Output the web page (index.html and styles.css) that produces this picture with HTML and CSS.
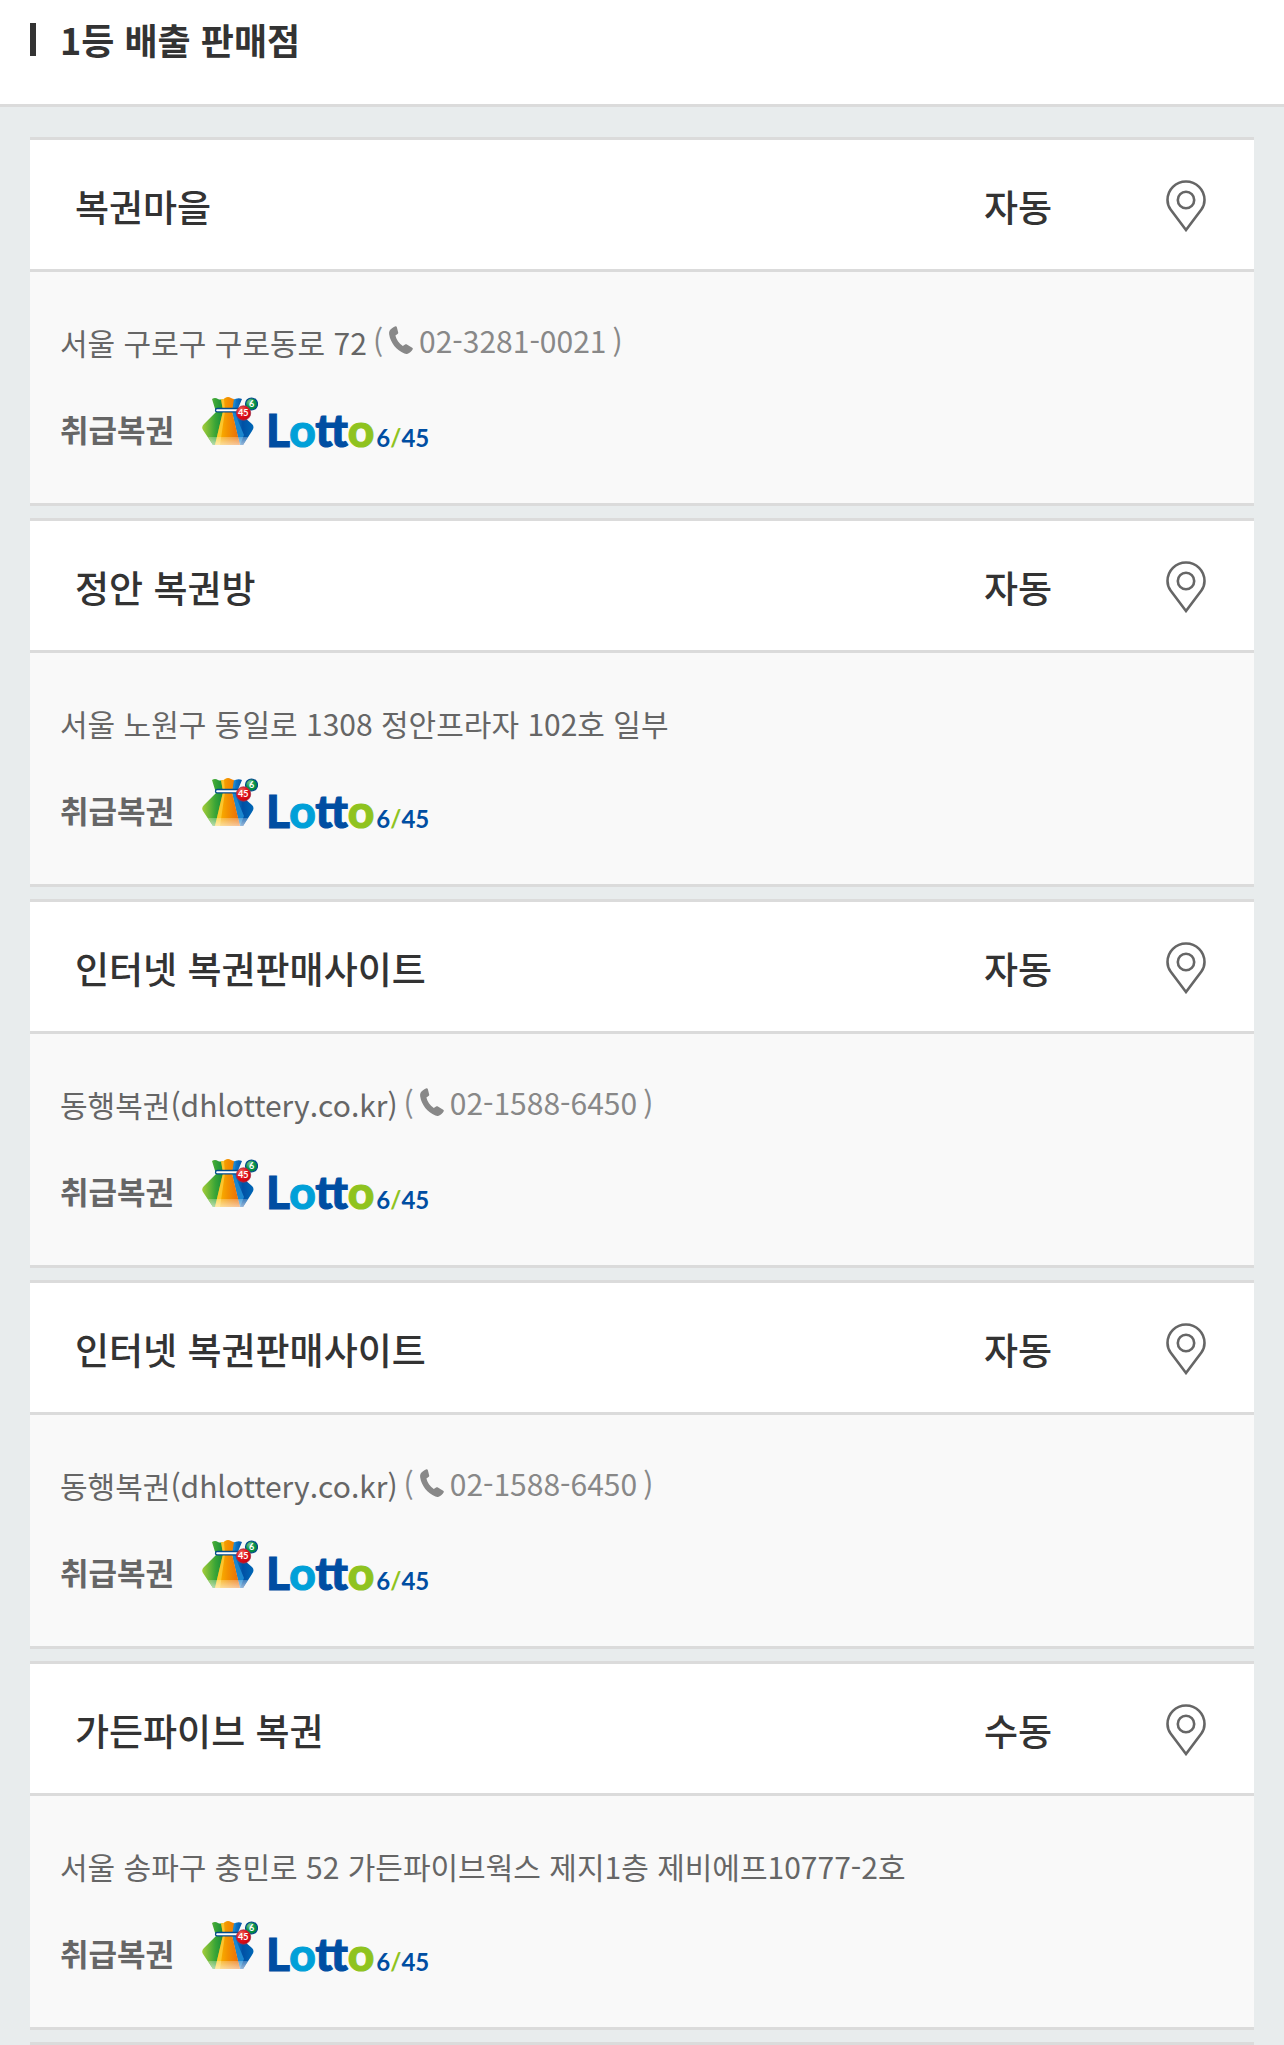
FILE: index.html
```html
<!DOCTYPE html>
<html lang="ko">
  <head>
    <meta charset="UTF-8" />
    <meta name="viewport" content="width=device-width, initial-scale=1.0" />
    <title>1등 배출 판매점</title>
    <link rel="stylesheet" href="styles.css">
  </head>
  <body>
    <!-- Shared icons -->
    <svg class="sprite" aria-hidden="true">
      <defs>
        <linearGradient id="bagGreen" x1="0" x2="1">
          <stop offset="0" stop-color="#a5cd39" />
          <stop offset="0.6" stop-color="#3aa536" />
          <stop offset="1" stop-color="#128a3c" />
        </linearGradient>
        <linearGradient id="bagOrange" x1="0" x2="1">
          <stop offset="0" stop-color="#fdc500" />
          <stop offset="0.5" stop-color="#f39200" />
          <stop offset="1" stop-color="#ea6a0a" />
        </linearGradient>
        <linearGradient id="bagBlue" x1="0" x2="1">
          <stop offset="0" stop-color="#1b8ad6" />
          <stop offset="0.5" stop-color="#0050a4" />
          <stop offset="1" stop-color="#0068b7" />
        </linearGradient>
        <linearGradient id="bagShine" x1="0" y1="0" x2="0" y2="1">
          <stop offset="0" stop-color="#fff" stop-opacity="0.25" />
          <stop offset="1" stop-color="#fff" stop-opacity="0.6" />
        </linearGradient>
        <radialGradient id="ballRed" cx="0.35" cy="0.3" r="0.8">
          <stop offset="0" stop-color="#f0705f" />
          <stop offset="0.5" stop-color="#e0121c" />
          <stop offset="1" stop-color="#c4000f" />
        </radialGradient>
        <radialGradient id="ballGreen" cx="0.35" cy="0.3" r="0.8">
          <stop offset="0" stop-color="#7cc68d" />
          <stop offset="0.5" stop-color="#0a9548" />
          <stop offset="1" stop-color="#00803c" />
        </radialGradient>
      </defs>
      <symbol id="pin" viewBox="0 0 40 52">
        <path d="M20 50 L4.6 29.5 C2.6 26.8 1.5 23.6 1.5 20 C1.5 9.6 9.8 1.5 20 1.5 S38.5 9.6 38.5 20 C38.5 23.6 37.4 26.8 35.4 29.5 Z" fill="none" stroke="#666" stroke-width="2.6" />
        <circle cx="20" cy="20" r="8.2" fill="none" stroke="#666" stroke-width="2.6" />
      </symbol>
      <symbol id="phone" viewBox="0 0 24 28">
        <path d="M1.5 3.6 C3 1.8 5 .6 6.6 .2 C7.3 .1 7.6 .5 7.8 1 L9.2 6.5 C9.3 7.3 9.1 7.7 8.5 8.1 L6.4 9.6 C7.4 13.6 9.8 17.4 13.8 20 L16.1 18.6 C16.8 18.2 17.3 18.2 17.9 18.6 L23.2 21.7 C23.9 22.2 24 22.6 23.7 23.3 C22.6 25.3 20.7 26.9 18.6 27.7 C17.5 28.1 16.5 27.9 15.4 27.4 C7.4 23.8 1.6 17 .2 8.4 C-.1 6.4 .3 4.9 1.5 3.6 Z" fill="#888" />
      </symbol>
      <symbol id="bag" viewBox="0 0 56 50">
        <path d="M10 2 Q13 0 16 2 Q18 3 21 2 L22 14 L14 48 L11 48 L1 33 Q-1 30 2 27 L14 15 Z" fill="url(#bagGreen)" />
        <path d="M40 2 Q36 0 31 3 L30 14 L38 48 L41 48 L50 34 Q53 30 50 27 L35 14 Z" fill="url(#bagBlue)" />
        <path d="M31 3 L34 2 L32 14 L42 38 L38 48 L30 14 Z" fill="#1b87cf" />
        <path d="M19 2 Q21 3 23 1 Q26 -1 29 1 Q31 2 32 2 L30 14 L38 48 L13 48 L21 14 Z" fill="url(#bagOrange)" />
        <path d="M19 2 L22 2 L23 14 L18 48 L13 48 L21 14 Z" fill="#ffd84a" opacity="0.6" />
        <path d="M6 40 L46 40 L41 48 L11 48 Z" fill="url(#bagShine)" />
        <rect x="13.5" y="11.5" width="25" height="3.4" rx="1.7" fill="#fff" stroke="#004b8d" stroke-width="1.3" />
        <circle cx="49.5" cy="7" r="6" fill="url(#ballGreen)" stroke="#004b8d" stroke-width="1.2" />
        <circle cx="41.5" cy="16" r="7.2" fill="url(#ballRed)" stroke="#a5304a" stroke-width="0.8" />
      </symbol>
    </svg>

    <header class="page-header">
      <h1>1등 배출 판매점</h1>
    </header>

    <main class="store-list">
      <article class="store">
        <div class="store-head">
          <h2>복권마을</h2>
          <span class="type">자동</span>
          <a href="#" class="map-link" aria-label="지도 보기"><svg><use href="#pin" /></svg></a>
        </div>
        <div class="store-body">
          <p class="address">
            <span>서울 구로구 구로동로 72</span>
            <span class="tel">(<a href="tel:02-3281-0021"><svg><use href="#phone" /></svg>02-3281-0021</a>)</span>
          </p>
          <div class="games">
            <strong>취급복권</strong>
            <div class="lotto">
              <svg viewBox="0 0 56 50"><use href="#bag" /><text x="47" y="10">6</text><text x="36" y="19">45</text></svg>
              <span class="lotto-name">L<span class="sky">o</span>tt<span class="lime">o</span></span>
              <span class="lotto-number">6<span class="lime">/</span>45</span>
            </div>
          </div>
        </div>
      </article>

      <article class="store">
        <div class="store-head">
          <h2>정안 복권방</h2>
          <span class="type">자동</span>
          <a href="#" class="map-link" aria-label="지도 보기"><svg><use href="#pin" /></svg></a>
        </div>
        <div class="store-body">
          <p class="address">
            <span>서울 노원구 동일로 1308 정안프라자 102호 일부</span>
          </p>
          <div class="games">
            <strong>취급복권</strong>
            <div class="lotto">
              <svg viewBox="0 0 56 50"><use href="#bag" /><text x="47" y="10">6</text><text x="36" y="19">45</text></svg>
              <span class="lotto-name">L<span class="sky">o</span>tt<span class="lime">o</span></span>
              <span class="lotto-number">6<span class="lime">/</span>45</span>
            </div>
          </div>
        </div>
      </article>

      <article class="store">
        <div class="store-head">
          <h2>인터넷 복권판매사이트</h2>
          <span class="type">자동</span>
          <a href="#" class="map-link" aria-label="지도 보기"><svg><use href="#pin" /></svg></a>
        </div>
        <div class="store-body">
          <p class="address">
            <span>동행복권(dhlottery.co.kr)</span>
            <span class="tel">(<a href="tel:02-1588-6450"><svg><use href="#phone" /></svg>02-1588-6450</a>)</span>
          </p>
          <div class="games">
            <strong>취급복권</strong>
            <div class="lotto">
              <svg viewBox="0 0 56 50"><use href="#bag" /><text x="47" y="10">6</text><text x="36" y="19">45</text></svg>
              <span class="lotto-name">L<span class="sky">o</span>tt<span class="lime">o</span></span>
              <span class="lotto-number">6<span class="lime">/</span>45</span>
            </div>
          </div>
        </div>
      </article>

      <article class="store">
        <div class="store-head">
          <h2>인터넷 복권판매사이트</h2>
          <span class="type">자동</span>
          <a href="#" class="map-link" aria-label="지도 보기"><svg><use href="#pin" /></svg></a>
        </div>
        <div class="store-body">
          <p class="address">
            <span>동행복권(dhlottery.co.kr)</span>
            <span class="tel">(<a href="tel:02-1588-6450"><svg><use href="#phone" /></svg>02-1588-6450</a>)</span>
          </p>
          <div class="games">
            <strong>취급복권</strong>
            <div class="lotto">
              <svg viewBox="0 0 56 50"><use href="#bag" /><text x="47" y="10">6</text><text x="36" y="19">45</text></svg>
              <span class="lotto-name">L<span class="sky">o</span>tt<span class="lime">o</span></span>
              <span class="lotto-number">6<span class="lime">/</span>45</span>
            </div>
          </div>
        </div>
      </article>

      <article class="store">
        <div class="store-head">
          <h2>가든파이브 복권</h2>
          <span class="type">수동</span>
          <a href="#" class="map-link" aria-label="지도 보기"><svg><use href="#pin" /></svg></a>
        </div>
        <div class="store-body">
          <p class="address">
            <span>서울 송파구 충민로 52 가든파이브웍스 제지1층 제비에프10777-2호</span>
          </p>
          <div class="games">
            <strong>취급복권</strong>
            <div class="lotto">
              <svg viewBox="0 0 56 50"><use href="#bag" /><text x="47" y="10">6</text><text x="36" y="19">45</text></svg>
              <span class="lotto-name">L<span class="sky">o</span>tt<span class="lime">o</span></span>
              <span class="lotto-number">6<span class="lime">/</span>45</span>
            </div>
          </div>
        </div>
      </article>

      <hr class="list-end" />
    </main>
  </body>
</html>
```

FILE: styles.css
```css
* {
  box-sizing: border-box;
}
body {
  margin: 0;
  background-color: #e8eced;
  color: #333;
  font-family: "Noto Sans CJK KR", sans-serif;
}
h1,
h2,
p {
  margin: 0;
}
a {
  color: inherit;
  text-decoration: none;
}
svg {
  display: block;
}
.sprite {
  position: absolute;
  width: 0;
  height: 0;
}

/* Page header */
.page-header {
  padding: 14px 30px 40px;
  background-color: #fff;
  border-bottom: 3px solid #dbdbdb;
}
.page-header h1 {
  display: flex;
  align-items: center;
  gap: 24px;
  font-size: 36px;
  line-height: 50px;
  font-weight: 700;
}
.page-header h1::before {
  content: "";
  width: 6px;
  height: 33px;
  background-color: #333;
}

/* Store cards */
.store-list {
  display: flex;
  flex-direction: column;
  gap: 12px;
  padding: 30px 30px 0;
}
.store {
  border-top: 3px solid #dbdbdb;
  border-bottom: 3px solid #dbdbdb;
}
.store-head {
  display: flex;
  align-items: center;
  padding: 40px 48px 37px 45px;
  background-color: #fff;
  border-bottom: 3px solid #dbdbdb;
}
.store-head h2,
.type {
  font-size: 37px;
  line-height: 50px;
  font-weight: 500;
}
.store-head h2 {
  flex: 1;
}
.type {
  width: 182px;
}
.map-link svg {
  width: 40px;
  height: 52px;
}
.store-body {
  padding: 45px 30px 48px;
  background-color: #f9f9f9;
  color: #666;
}
.address {
  display: flex;
  align-items: center;
  gap: 6px;
  margin-bottom: 30px;
  font-size: 30px;
  line-height: 50px;
}
.tel {
  display: flex;
  align-items: center;
  gap: 6px;
  padding-bottom: 4px;
  color: #888;
  line-height: 46px;
}
.tel a {
  display: flex;
  align-items: center;
  gap: 6px;
}
.tel svg {
  width: 24px;
  height: 28px;
}
.games {
  display: flex;
  align-items: flex-end;
  gap: 28px;
  height: 58px;
}
.games strong {
  font-size: 31px;
  line-height: 52px;
  font-weight: 700;
}

/* Lotto logo */
.lotto {
  display: flex;
  align-items: baseline;
  height: 58px;
  color: #004ea2;
  font-family: Lato, sans-serif;
  line-height: 50px;
}
.lotto svg {
  width: 56px;
  height: 50px;
  margin-right: 8px;
}
.lotto text {
  font-size: 9px;
  font-weight: 700;
  fill: #fff;
}
.lotto-name {
  font-size: 46px;
  font-weight: 900;
  -webkit-text-stroke: 1px currentColor;
}
.lotto-number {
  margin-left: 2px;
  font-size: 24px;
  font-weight: 700;
}
.sky {
  color: #00a0d8;
}
.lime {
  color: #8fc31f;
}

.list-end {
  width: 100%;
  margin: 0;
  border: 0;
  border-top: 3px solid #dbdbdb;
}
```
